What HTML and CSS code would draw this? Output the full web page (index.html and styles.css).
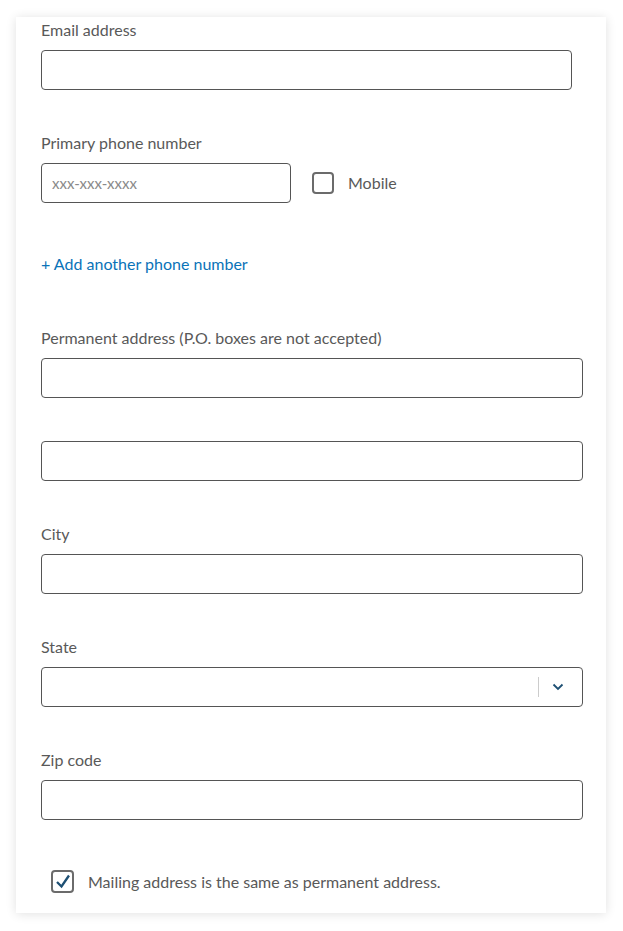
FILE: index.html
```html
<!DOCTYPE html>
<html lang="en">
<head>
    <meta charset="UTF-8">
    <meta name="viewport" content="width=device-width, initial-scale=1.0">
    <title>Contact information</title>
    <link rel="stylesheet" href="styles.css">
</head>
<body>
    <form class="card">
        <div class="form-group">
            <label for="email">Email address</label>
            <input type="text" id="email" class="field field-email">
        </div>

        <div class="form-group">
            <label for="phone">Primary phone number</label>
            <div class="phone-row">
                <input type="text" id="phone" class="field field-phone" placeholder="xxx-xxx-xxxx">
                <label class="check">
                    <span class="box"></span>
                    <span>Mobile</span>
                </label>
            </div>
        </div>

        <a href="#" class="add-link">+ Add another phone number</a>

        <div class="form-group">
            <label for="addr1">Permanent address (P.O. boxes are not accepted)</label>
            <input type="text" id="addr1" class="field">
        </div>

        <div class="form-group">
            <input type="text" class="field">
        </div>

        <div class="form-group">
            <label for="city">City</label>
            <input type="text" id="city" class="field">
        </div>

        <div class="form-group">
            <label for="state">State</label>
            <div class="field select">
                <span class="select-sep"></span>
                <svg class="chevron" width="12" height="8" viewBox="0 0 12 8">
                    <path d="M1.5 1.5 L6 6 L10.5 1.5" fill="none" stroke="#1d4f73" stroke-width="1.8"/>
                </svg>
            </div>
        </div>

        <div class="form-group">
            <label for="zip">Zip code</label>
            <input type="text" id="zip" class="field">
        </div>

        <label class="check check-mail">
            <span class="box checked">
                <svg width="18" height="17" viewBox="0 0 18 17">
                    <path d="M3 9 L7.5 13.5 L15 2.5" fill="none" stroke="#1d4f73" stroke-width="2.3"/>
                </svg>
            </span>
            <span>Mailing address is the same as permanent address.</span>
        </label>
    </form>
</body>
</html>
```

FILE: styles.css
```css
body {
    margin: 0;
    padding: 17px 17px 18px 16px;
    background-color: #fff;
    font-family: Lato, "Open Sans", Arial, sans-serif;
    font-size: 16px;
    color: #595959;
}
.card {
    width: 590px;
    box-sizing: border-box;
    padding: 3px 23px 0 25px;
    height: 896px;
    background-color: #fff;
    box-shadow: 0 1px 10px rgba(0,0,0,0.12);
}
.form-group {
    margin-bottom: 43px;
}
.form-group label {
    display: block;
    line-height: 20px;
    margin-bottom: 10px;
}
.field {
    display: block;
    width: 100%;
    height: 40px;
    box-sizing: border-box;
    border: 1px solid #555;
    border-radius: 4px;
    background-color: #fff;
    font-family: inherit;
    font-size: 15px;
    padding: 0 12px;
    margin: 0;
}
.field-email {
    width: 531px;
}
.field-phone {
    width: 250px;
    padding-left: 10px;
}
.field-phone::placeholder {
    color: #8a8a8a;
    font-size: 15px;
}
.phone-row {
    display: flex;
    align-items: center;
}
.form-group .check,
.check {
    display: flex;
    align-items: center;
    margin: 0;
    line-height: 20px;
    color: #595959;
}
.phone-row .check {
    margin-left: 21px;
}
.box {
    width: 22px;
    height: 22px;
    box-sizing: border-box;
    border: 2px solid #6b6b6b;
    border-radius: 4px;
    margin-right: 14px;
    display: flex;
    align-items: center;
    justify-content: center;
}
.add-link {
    display: block;
    margin: 51px 0 54px;
    line-height: 20px;
    color: #0a73b8;
    text-decoration: none;
}
.select {
    display: flex;
    align-items: center;
    justify-content: flex-end;
    padding-right: 18px;
}
.select-sep {
    width: 1px;
    height: 20px;
    background-color: #ccc;
    margin-right: 13px;
}
.chevron {
    display: block;
}
.check-mail {
    margin-top: 50px;
    padding-left: 10px;
}
.check-mail .box {
    width: 23px;
    height: 23px;
}
```
